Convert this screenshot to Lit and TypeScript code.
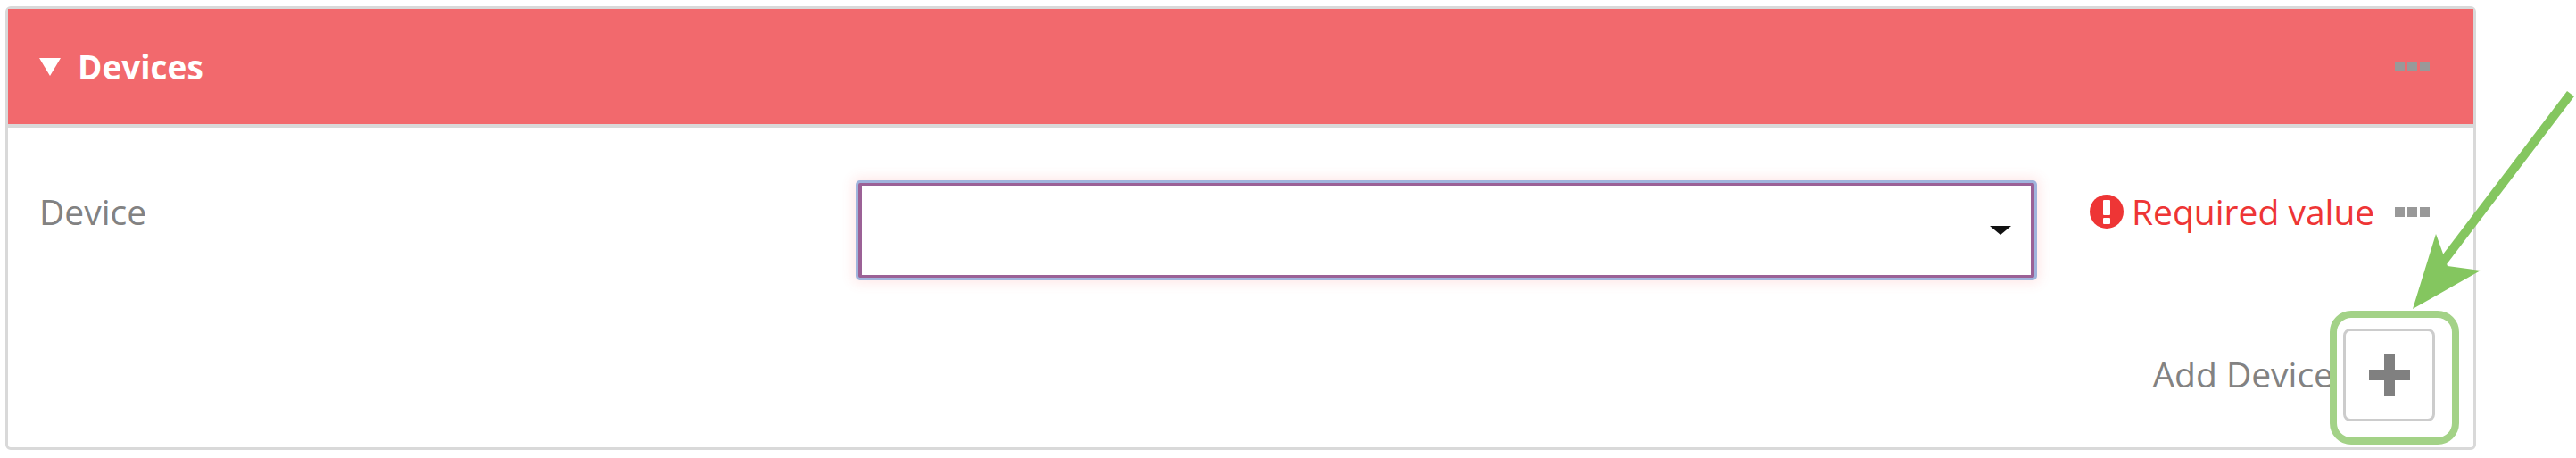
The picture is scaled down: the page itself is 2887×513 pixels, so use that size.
import { LitElement, html, css } from "lit";
import { customElement } from "lit/decorators.js";

@customElement("app-root")
export class AppRoot extends LitElement {
  static styles = css`
    :host {
      display: block;
      position: relative;
      height: 513px;
      width: 2887px;
      overflow: hidden;
      background: #fff;
      font-family: "Open Sans", Lato, sans-serif;
      font-size: 39px;
      color: #828282;
      box-sizing: border-box;
      padding: 7px 0 0 6px;
    }
    .panel {
      box-sizing: border-box;
      width: 2769px;
      height: 497px;
      border: 3px solid #d9d9d9;
      border-radius: 6px;
      display: flex;
      flex-direction: column;
    }
    .head {
      box-sizing: border-box;
      height: 133px;
      background: #f2696d;
      border-bottom: 4px solid #d9d9d9;
      display: flex;
      align-items: center;
      padding: 0 49px 0 35px;
      color: #fff;
      font-weight: 700;
      font-size: 37px;
    }
    .caret {
      width: 0;
      height: 0;
      border-left: 12px solid transparent;
      border-right: 12px solid transparent;
      border-top: 20px solid #fff;
      margin-right: 19px;
    }
    .grow { flex: 1; }
    .dots { display: flex; gap: 3px; }
    .dots i { width: 11px; height: 11px; background: #999; display: block; }
    .row {
      display: flex;
      align-items: flex-start;
      padding: 62px 49px 0 35px;
    }
    .label {
      width: 918px;
      line-height: 44px;
      margin-top: 10px;
    }
    .select {
      box-sizing: border-box;
      width: 1318px;
      height: 106px;
      border: 4px solid #9b6196;
      border-width: 3px 4px;
      border-radius: 2px;
      box-shadow: 0 0 0 3px #a0b4dc, 0 0 14px 6px rgba(255, 90, 90, 0.14);
      background: #fff;
      display: flex;
      align-items: center;
      justify-content: flex-end;
      padding-right: 22px;
    }
    .select span {
      width: 0;
      height: 0;
      border-left: 12px solid transparent;
      border-right: 12px solid transparent;
      border-top: 10px solid #111;
    }
    .err {
      flex: 1;
      display: flex;
      align-items: center;
      height: 44px;
      margin-top: 10px;
      padding-left: 61px;
      color: #ee3535;
    }
    .err svg { width: 40px; height: 40px; margin-right: 8px; flex: none; }
    .err .msg { flex: 1; line-height: 44px; margin-top: -1px; }
    .add {
      display: flex;
      justify-content: flex-end;
      align-items: center;
      gap: 11px;
      padding: 57px 43px 0 0;
    }
    .add span { margin-top: -4px; }
    .btn {
      box-sizing: border-box;
      width: 103px;
      height: 104px;
      border: 3px solid #ccc;
      border-radius: 8px;
      background: #fff;
      padding: 0;
      display: flex;
      align-items: center;
      justify-content: center;
    }
    .btn svg { width: 46px; height: 46px; }
    .overlay {
      position: absolute;
      left: 0;
      top: 0;
      width: 2887px;
      height: 513px;
      pointer-events: none;
    }
  `;

  render() {
    return html`
      <div class="panel">
        <div class="head">
          <span class="caret"></span>
          <span>Devices</span>
          <span class="grow"></span>
          <span class="dots"><i></i><i></i><i></i></span>
        </div>
        <div class="row">
          <div class="label">Device</div>
          <div class="select"><span></span></div>
          <div class="err">
            <svg viewBox="0 0 40 40">
              <circle cx="20" cy="20" r="19" fill="#ee3535"></circle>
              <rect x="16" y="7" width="8" height="17" rx="1" fill="#fff"></rect>
              <rect x="16" y="27" width="8" height="7" rx="1" fill="#fff"></rect>
            </svg>
            <span class="msg">Required value</span>
            <span class="dots"><i></i><i></i><i></i></span>
          </div>
        </div>
        <div class="add">
          <span>Add Device</span>
          <button class="btn">
            <svg viewBox="0 0 46 46">
              <path d="M17 0h12v17h17v12H29v17H17V29H0V17h17z" fill="#808080"></path>
            </svg>
          </button>
        </div>
      </div>
      <svg class="overlay" viewBox="0 0 2887 513">
        <rect x="2615" y="352" width="137" height="142" rx="20" fill="none" stroke="#a3d287" stroke-width="8"></rect>
        <line x1="2881" y1="105" x2="2735" y2="297" stroke="#84c65f" stroke-width="10"></line>
        <path d="M2704 346L2730 262L2743 298L2780 303Z" fill="#84c65f"></path>
      </svg>
    `;
  }
}
